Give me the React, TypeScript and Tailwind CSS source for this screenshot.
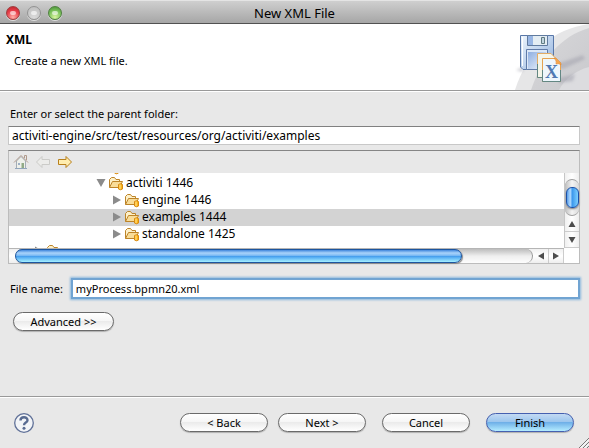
import { useState } from 'react';
import type { ReactNode } from 'react';

const trackX = 'bg-linear-to-b from-[#bdbdbd] via-[#efefef] to-[#fdfdfd]';
const focusRing = 'shadow-[0_0_2px_1px_#8db9de]';

function Folder() {
  return (
    <svg width="16" height="16" viewBox="0 0 16 16" className="shrink-0" aria-hidden="true">
      <path d="M1.5 12.5V4.5L3.5 2.5H6.5L8 4.500H11.5V6.5" fill="#fdf0c8" stroke="#bd8428" />
      <path d="M1.5 12.5L4.5 6.5H14.5L11.5 12.5Z" fill="#f8dc98" stroke="#bd8428" />
      <path d="M10.500 9.500Q12.500 8 14.500 9.500V14Q12.500 15.500 10.500 14Z" fill="#fbb51c" stroke="#d98a10" />
      <path d="M12 9.500V14" stroke="#ffe794" />
    </svg>
  );
}

function Twisty({ open }: { open?: boolean }) {
  return (
    <svg width="10" height="10" viewBox="0 0 10 10" className="shrink-0" aria-hidden="true">
      <path d={open ? 'M0.500 1H9.500L5 9Z' : 'M1 0.500V9.500L9 5Z'} fill="#8b8b8b" />
    </svg>
  );
}

function Row({ label, indent, open, selected, onClick }: {
  label: string; indent: string; open?: boolean; selected?: boolean; onClick?: () => void;
}) {
  return (
    <button
      type="button"
      onClick={onClick}
      className={`flex h-[17px] w-full shrink-0 items-center gap-0.5 pb-px text-left ${indent} ${selected ? 'bg-[#d3d3d3]' : ''}`}
    >
      <Twisty open={open} />
      <Folder />
      <span>{label}</span>
    </button>
  );
}

function PushButton({ children, width, primary }: { children: ReactNode; width: string; primary?: boolean }) {
  const face = primary
    ? 'border-[#4560b0] bg-[linear-gradient(#c3daf3,#9cc6ee_45%,#6fb0e8_50%,#b4ecff)]'
    : 'border-[#6a6a6a] bg-[linear-gradient(#ffffff,#f6f6f6_45%,#ebebeb_50%,#ffffff)]';
  return (
    <button type="button" className={`flex h-[19px] items-center justify-center rounded-full border shadow-[0_1px_1px_#b0b0b0] ${width} ${face}`}>
      {children}
    </button>
  );
}

function Arrow({ d, label, className }: { d: string; label: string; className: string }) {
  return (
    <button type="button" aria-label={label} className={`flex items-center justify-center ${className}`}>
      <svg width="8" height="8" viewBox="0 0 8 8"><path d={d} fill="#4c4c4c" /></svg>
    </button>
  );
}

function Banner() {
  return (
    <svg width="74" height="66" viewBox="0 0 74 66" className="shrink-0" aria-hidden="true">
      <defs>
        <linearGradient id="disk" x1="0" y1="0" x2="1" y2="1">
          <stop offset="0" stopColor="#edf5fc" /><stop offset="1" stopColor="#8fb0de" />
        </linearGradient>
        <linearGradient id="plate" x1="0" y1="0" x2="1" y2="1">
          <stop offset="0" stopColor="#8eaee0" /><stop offset="1" stopColor="#f2f7fd" />
        </linearGradient>
        <linearGradient id="sweep" x1="0" y1="0" x2="1" y2="1">
          <stop offset="0" stopColor="#d8d8da" /><stop offset="1" stopColor="#c9c9cd" />
        </linearGradient>
        <filter id="soft"><feGaussianBlur stdDeviation="1.5" /></filter>
      </defs>
      <path d="M0 66C12 28 38 5 74 0V66Z" fill="#e6e6e7" />
      <path d="M16 66C26 36 46 12 74 4V66Z" fill="url(#sweep)" />
      <path d="M44 66C50 54 62 46 74 43V66Z" fill="#dcdcdf" />
      <path d="M36 42L68 31L70 35L48 45Z M1 46L8 43V48Z M44 54L60 50L58 57L44 59Z" fill="#9d9da9" opacity=".5" filter="url(#soft)" />
      <path d="M5.500 11.500H38.500V45.500H8L5.500 43Z" fill="url(#disk)" stroke="#5877a8" />
      <path d="M7.500 13V42" stroke="#fff" />
      <path d="M12.500 11.500H32.500V21.500H12.500Z" fill="#e4edf3" stroke="#607b9f" />
      <path d="M13 12H18V21H13Z" fill="#98b6e4" />
      <path d="M26.500 13.500H29.500V19.500H26.500Z" fill="#c1d4df" stroke="#607b82" />
      <path d="M11.500 25.500H32.500V45.500H11.500Z" fill="#dce8f7" stroke="#607ba8" />
      <path d="M13 28H31V45H13Z" fill="url(#plate)" />
      <path d="M22.500 29.500H36L40.500 34V53.500H22.500Z" fill="#f5f5e9" stroke="#e2ac65" />
      <path d="M22.500 40V53.500H28" fill="none" stroke="#638783" />
      <path d="M27.500 34.500H40.500L45.500 39.500V57.500H27.500Z" fill="#eef6fc" stroke="#e5a250" />
      <path d="M27.500 46V57.500H45.500V46" fill="none" stroke="#638783" />
      <path d="M39 34H41L46 39V41Q44 39 41 40Q42 37 39 34Z" fill="#f4a54b" stroke="#de832d" strokeWidth=".5" />
      <text x="36.500" y="54" textAnchor="middle" fontFamily="Liberation Serif, serif" fontWeight="bold" fontSize="18" fill="#5079b3">X</text>
    </svg>
  );
}

function Light({ face, label }: { face: string; label: string }) {
  return (
    <button type="button" aria-label={label} className={`h-3.5 w-3.5 rounded-full border shadow-[0_1px_0_#dedede] ${face}`}>
      <span className="mx-auto block h-1 w-1.5 rounded-full bg-white/60" />
    </button>
  );
}

export default function App() {
  const [folder, setFolder] = useState('activiti-engine/src/test/resources/org/activiti/examples');
  const [name, setName] = useState('myProcess.bpmn20.xml');
  const [selected, setSelected] = useState('examples 1444');

  return (
    <div className="flex min-h-screen flex-col bg-[#e8e8e8] font-['Noto_Sans',sans-serif] text-[11px] leading-4 text-black">
      <header className="grid h-6 grid-cols-[1fr_auto_1fr] items-center border-t border-b border-t-[#e4e4e4] border-b-[#515151] bg-linear-to-b from-[#cfcfcf] to-[#a6a6a6] px-1.5 pt-0.5">
        <div className="flex gap-[7px]">
          <Light label="Close" face="border-[#a03e3e] bg-[radial-gradient(circle_at_50%_85%,#ffb0a8,#e8404a_55%,#b81e28)]" />
          <Light label="Minimize" face="border-[#939393] bg-[radial-gradient(circle_at_50%_85%,#dadada,#bcbcbc)]" />
          <Light label="Zoom" face="border-[#4f8040] bg-[radial-gradient(circle_at_50%_85%,#d9f5a0,#7cc35c_55%,#428a34)]" />
        </div>
        <h1 className="text-[13px]">New XML File</h1>
      </header>

      <section className="flex justify-between border-b border-[#999999] bg-white">
        <div className="pt-2 pl-1.5">
          <h2 className="text-[12px] font-bold">XML</h2>
          <p className="pt-[5px] pl-2">Create a new XML file.</p>
        </div>
        <Banner />
      </section>

      <main className="grow border-t border-white pr-[9px] pl-2">
        <label htmlFor="folder" className="mt-3.5 block pl-0.5">Enter or select the parent folder:</label>
        <input
          id="folder"
          value={folder}
          onChange={(e) => setFolder(e.target.value)}
          className="mt-1 block h-[19px] w-full border border-[#c8c8c8] border-t-[#808080] bg-white px-[3px] text-[12px] outline-none"
        />

        <div className="mt-[5px] border border-[#bcbcbc] border-t-[#858585]">
          <div className="flex h-[22px] items-center gap-1.5 px-1">
            <button type="button" aria-label="Home">
              <svg width="16" height="16" viewBox="0 0 16 16">
                <path d="M3.500 7V14.500H12.500V7L8 2.500Z" fill="#eef0ea" stroke="#a5adb5" />
                <path d="M1 8.500L8 1.500L15 8.500M11.500 4V1.500H13.500V6" fill="none" stroke="#b19b8c" />
                <path d="M5 9H7V11H5Z" fill="#9dafc5" /><path d="M8.500 9H11V14H8.500Z" fill="#91aa86" />
                <path d="M2 14.500H14" stroke="#91a5bb" />
              </svg>
            </button>
            <button type="button" aria-label="Back" disabled>
              <svg width="16" height="16" viewBox="0 0 16 16"><path d="M1.500 8L7 2.500V5.500H14.500V10.500H7V13.500Z" fill="#ececea" stroke="#cbcbc8" /></svg>
            </button>
            <button type="button" aria-label="Forward">
              <svg width="16" height="16" viewBox="0 0 16 16"><path d="M14.500 8L9 2.500V5.500H1.500V10.500H9V13.500Z" fill="#ffedaf" stroke="#b8801c" /></svg>
            </button>
          </div>

          <div className="grid grid-cols-[1fr_15px] bg-white">
            <div className="flex h-[75px] flex-col overflow-hidden text-[12px]">
              <div className="-mt-[15px] shrink-0">
                <div className="flex h-[17px] items-center pl-[95px]"><Folder /></div>
                <Row label="activiti 1446" indent="pl-[87px]" open selected={selected === 'activiti 1446'} onClick={() => setSelected('activiti 1446')} />
                {['engine 1446', 'examples 1444', 'standalone 1425'].map((item) => (
                  <Row key={item} label={item} indent="pl-[103px]" selected={selected === item} onClick={() => setSelected(item)} />
                ))}
                <div className="flex h-[17px] items-center gap-0.5 pb-0.5 pl-[25px]"><Twisty /><Folder /></div>
              </div>
            </div>
            <div className="flex flex-col border-l border-[#c6c6c6] bg-linear-to-r from-[#f0f0f0] via-white to-[#eeeeee]">
              <div className="mt-1.5 flex h-[37px] flex-col items-center rounded-full border-y border-[#9d9d9d] bg-linear-to-r from-[#bdbdbd] via-[#f4f4f4] to-[#dadada]">
                <div className="mt-[7px] h-[21px] w-[13px] rounded-[6px] border border-[#1b50a8] bg-[linear-gradient(90deg,#5a9ee8,#b4dcff_30%,#3d98ec_48%,#7cd0ff)] shadow-[0_1px_2px_#777777]" />
              </div>
              <Arrow label="Scroll up" d="M4 1L7.500 7H0.500Z" className="h-[15px]" />
              <Arrow label="Scroll down" d="M4 7L7.500 1H0.500Z" className="h-[17px] border-y border-[#cccccc]" />
            </div>
            <div className="flex h-[15px] border-t border-[#b5b5b5] bg-linear-to-b from-[#f0f0f0] via-white to-[#eeeeee]">
              <div className={`ml-1.5 grow rounded-full border-r border-[#999999] ${trackX}`}>
                <div className="h-3.5 w-[86.5%] rounded-full border border-[#1c559f] bg-[linear-gradient(#3f86dc,#a8d2fa_25%,#80bdf5_45%,#439cec_52%,#68bcf6_70%,#a5f0ff)] shadow-[1px_1px_1px_#888888]" />
              </div>
              <Arrow label="Scroll left" d="M1 4L7 0.500V7.500Z" className="w-[15px]" />
              <Arrow label="Scroll right" d="M7 4L1 0.500V7.500Z" className="w-4 border-x border-[#cccccc]" />
            </div>
          </div>
        </div>

        <div className="mt-3.5 flex items-center gap-2 pl-0.5">
          <label htmlFor="name">File name:</label>
          <input
            id="name"
            value={name}
            onChange={(e) => setName(e.target.value)}
            className={`h-[21px] min-w-0 grow border-2 border-[#71a4d2] bg-white px-[3px] outline-none ${focusRing}`}
          />
        </div>

        <div className="mt-[13px] pl-[5px]">
          <PushButton width="w-[101px]">Advanced &gt;&gt;</PushButton>
        </div>
      </main>

      <footer className="relative flex items-center border-t border-[#999999] pr-[15px] pl-3.5 shadow-[inset_0_1px_0_#ffffff]">
        <button type="button" aria-label="Help" className="mt-4 mb-[15px]">
          <svg width="20" height="20" viewBox="0 0 20 20" className="block">
            <circle cx="10" cy="10" r="9.300" fill="#f2f4f7" stroke="#607198" strokeWidth="1.300" />
            <path d="M6.500 7.500C6.500 3.200 13.500 3.200 13.500 7.200C13.500 9.600 10 9.600 10 12.200" fill="none" stroke="#586b91" strokeWidth="2.400" />
            <circle cx="10" cy="15.200" r="1.500" fill="#586b91" />
          </svg>
        </button>
        <div className="ml-auto flex gap-4">
          <div className="flex gap-2.5">
            <PushButton width="w-[88px]">&lt; Back</PushButton>
            <PushButton width="w-[88px]">Next &gt;</PushButton>
          </div>
          <PushButton width="w-[88px]">Cancel</PushButton>
          <PushButton width="w-[88px]" primary>Finish</PushButton>
        </div>
        <svg width="10" height="10" viewBox="0 0 10 10" className="absolute right-0 bottom-0" aria-hidden="true">
          <path d="M0 10L10 0M4 10L10 4M8 10L10 8" stroke="#777777" />
          <path d="M1.500 10L10 1.500M5.500 10L10 5.500" stroke="#ffffff" />
        </svg>
      </footer>
    </div>
  );
}
